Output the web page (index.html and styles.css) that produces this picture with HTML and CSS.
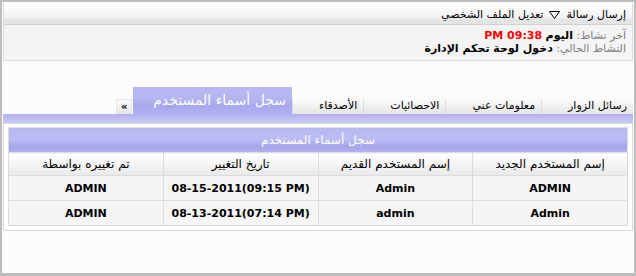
FILE: index.html
```html
<!DOCTYPE html>
<html lang="ar" dir="rtl">
<head>
    <meta charset="UTF-8">
    <title>سجل أسماء المستخدم</title>
    <link rel="stylesheet" href="styles.css">
</head>
<body>
    <div class="frame">

        <!-- Profile links and activity -->
        <div class="profile-box">
            <div class="profile-bar">
                <a href="#">إرسال رسالة</a>
                <svg class="arrow" width="11" height="8" viewBox="0 0 11 8"><path d="M0.5 0.5 H10.5 L5.5 7.5 Z" fill="none" stroke="#000" stroke-width="1"/></svg>
                <a href="#">تعديل الملف الشخصي</a>
            </div>
            <div class="activity">
                <div><span class="label">آخر نشاط:</span> <b>اليوم</b> <b class="time">09:38 PM</b></div>
                <div><span class="label">النشاط الحالي:</span> <b>دخول لوحة تحكم الإدارة</b></div>
            </div>
        </div>

        <!-- Tabs -->
        <div class="tabs">
            <a class="tab" href="#">رسائل الزوار</a>
            <a class="tab" href="#">معلومات عني</a>
            <a class="tab" href="#">الاحصائيات</a>
            <a class="tab" href="#">الأصدقاء</a>
            <a class="tab active" href="#">سجل أسماء المستخدم</a>
            <a class="tab more" href="#">»</a>
        </div>
        <div class="tab-line"></div>

        <!-- Username history -->
        <div class="panel">
            <table class="history">
                <thead>
                    <tr>
                        <th class="title" colspan="4">سجل أسماء المستخدم</th>
                    </tr>
                    <tr class="heads">
                        <th>إسم المستخدم الجديد</th>
                        <th>إسم المستخدم القديم</th>
                        <th>تاريخ التغيير</th>
                        <th>تم تغييره بواسطة</th>
                    </tr>
                </thead>
                <tbody>
                    <tr>
                        <td>ADMIN</td>
                        <td>Admin</td>
                        <td><span dir="ltr">08-15-2011(09:15 PM)</span></td>
                        <td>ADMIN</td>
                    </tr>
                    <tr>
                        <td>Admin</td>
                        <td>admin</td>
                        <td><span dir="ltr">08-13-2011(07:14 PM)</span></td>
                        <td>ADMIN</td>
                    </tr>
                </tbody>
            </table>
        </div>

    </div>
</body>
</html>
```

FILE: styles.css
```css
* {
    box-sizing: border-box;
}

body {
    margin: 0;
    background-color: #fcfcfc;
    font-family: 'DejaVu Sans', sans-serif;
    font-size: 11px;
    color: #000;
}

a {
    color: #000;
    text-decoration: none;
}

.frame {
    height: 276px;
    border: 2px solid #bcbcbc;
    border-bottom-width: 3px;
    padding: 1px 1px 0;
    background-color: #fcfcfc;
}

/* Top box */
.profile-box {
    border: 1px solid #dcdcdc;
    border-top: none;
}

.profile-bar {
    height: 22px;
    padding: 2px 6px 0;
    line-height: 18px;
    background: linear-gradient(#ffffff, #f2f2f2 70%, #e4e4e4 78%, #e4e4e4);
    border-bottom: 1px solid #d2d2d2;
    display: flex;
    align-items: center;
    gap: 6px;
}

.arrow {
    margin-top: 1px;
}

.activity {
    height: 35px;
    padding: 4px 6px 0;
    line-height: 13px;
    background-color: #f4f4f4;
}

.activity .label {
    color: #808080;
}

.activity .time {
    color: #ff0000;
}

/* Tabs */
.tabs {
    display: flex;
    align-items: flex-end;
    height: 27px;
    margin-top: 26px;
}

.tab {
    height: 15px;
    line-height: 14px;
    padding: 0 6px 0 26px;
    background: linear-gradient(#fcfcfc, #e4e4e4);
    border-left: 1px solid #dadada;
    white-space: nowrap;
}

.tab.active {
    height: 27px;
    line-height: 27px;
    padding: 0 6px 0 20px;
    margin-left: 1px;
    font-size: 14px;
    color: #fff;
    border-left: none;
    background: linear-gradient(#b8b8f2, #b4b4f0 45%, #a6a6ec 70%, #b2b2f0);
}

.tab.more {
    width: 16px;
    padding: 0;
    text-align: center;
    font-weight: bold;
    font-size: 10px;
    border: 1px solid #e4e4e4;
    border-bottom: none;
}

.tab-line {
    height: 9px;
    background: linear-gradient(#b0b0ef, #cbcbf6);
}

/* Panel with table */
.panel {
    border: 1px solid #d8d8d8;
    background-color: #fff;
    padding: 3px 4px 4px;
}

.history {
    width: 100%;
    border-collapse: collapse;
    table-layout: fixed;
}

.history th,
.history td {
    border: 1px solid #dcdcdc;
    text-align: center;
    padding: 0;
}

.history th.title {
    height: 25px;
    font-size: 12px;
    font-weight: normal;
    color: #fff;
    background: linear-gradient(#b8b8f2, #bcbcf4 45%, #a4a4ea 75%, #b4b4f0);
}

.history .heads th {
    height: 23px;
    font-size: 12px;
    font-weight: normal;
    background: linear-gradient(#ffffff, #e9e9e9);
}

.history td {
    height: 25px;
    font-weight: bold;
    background-color: #f5f5f5;
}
```
